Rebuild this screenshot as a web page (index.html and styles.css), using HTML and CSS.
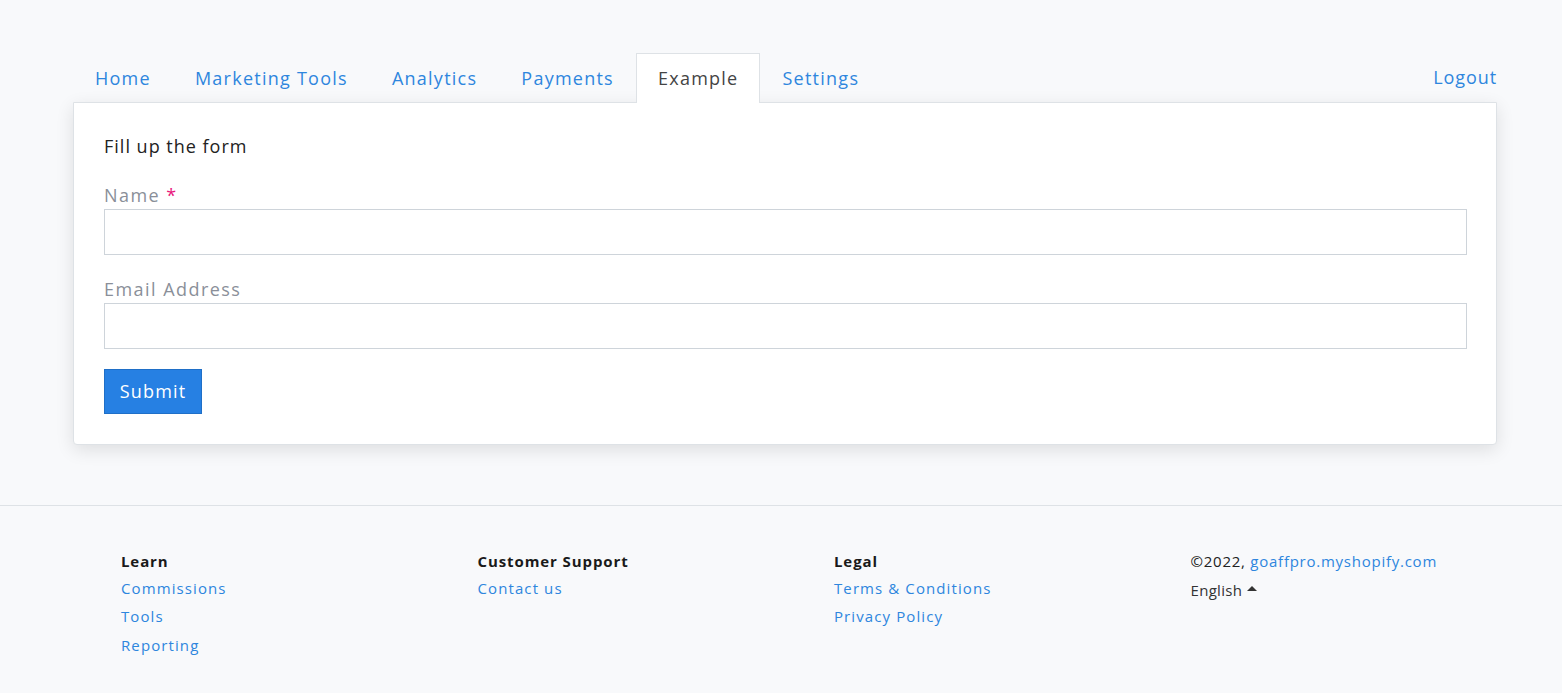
FILE: index.html
```html
<!DOCTYPE html>
<html>
<head>
<meta charset="utf-8">
<link rel="stylesheet" href="styles.css">
</head>
<body>
<div class="page">
  <nav class="tabs">
    <ul class="tab-list">
      <li class="tab"><a href="#">Home</a></li>
      <li class="tab"><a href="#">Marketing Tools</a></li>
      <li class="tab"><a href="#">Analytics</a></li>
      <li class="tab"><a href="#">Payments</a></li>
      <li class="tab active"><a href="#">Example</a></li>
      <li class="tab"><a href="#">Settings</a></li>
    </ul>
    <a class="logout" href="#">Logout</a>
  </nav>
  <section class="card">
    <h2 class="card-title">Fill up the form</h2>
    <div class="field">
      <label class="label">Name <span class="req">*</span></label>
      <input class="input" type="text">
    </div>
    <div class="field">
      <label class="label">Email Address</label>
      <input class="input" type="text">
    </div>
    <button class="btn">Submit</button>
  </section>
</div>
<footer class="footer">
  <div class="footer-grid">
    <div class="col">
      <div class="col-title">Learn</div>
      <a class="flink" href="#">Commissions</a>
      <a class="flink" href="#">Tools</a>
      <a class="flink" href="#">Reporting</a>
    </div>
    <div class="col">
      <div class="col-title">Customer Support</div>
      <a class="flink" href="#">Contact us</a>
    </div>
    <div class="col">
      <div class="col-title">Legal</div>
      <a class="flink" href="#">Terms &amp; Conditions</a>
      <a class="flink" href="#">Privacy Policy</a>
    </div>
    <div class="col">
      <div class="copy">©2022, <a class="clink" href="#">goaffpro.myshopify.com</a></div>
      <div class="lang">English <span class="caret"></span></div>
    </div>
  </div>
</footer>
</body>
</html>
```
FILE: styles.css
```css
* { box-sizing: border-box; }
html, body { margin: 0; padding: 0; }
body {
  background: #f8f9fb;
  font-family: "Open Sans", "DejaVu Sans", sans-serif;
  color: #222;
}
a { text-decoration: none; }
.page {
  padding: 52px 65px 60px 73px;
}
.tabs {
  display: flex;
  align-items: flex-end;
  justify-content: space-between;
}
.tab-list {
  display: flex;
  list-style: none;
  margin: 0;
  padding: 0;
}
.tab a {
  display: block;
  padding: 0 21px 2px;
  height: 50px;
  line-height: 48px;
  font-size: 18px;
  letter-spacing: 1.25px;
  color: #2e86de;
  border: 1px solid transparent;
  border-bottom: none;
  margin-bottom: -1px;
  position: relative;
  z-index: 1;
}
.tab.active a {
  background: #fff;
  border-color: #dee2e6;
  color: #444;
}
.logout {
  font-size: 18px;
  letter-spacing: 0.9px;
  color: #2e86de;
  line-height: 50px;
  height: 50px;
}
.card {
  background: #fff;
  border: 1px solid #dee2e6;
  border-radius: 0 0 4px 4px;
  box-shadow: 0 5px 18px rgba(0, 0, 0, 0.11);
  padding: 31px 29px 30px 30px;
}
.card-title {
  margin: 0 0 23px 0;
  font-size: 18px;
  font-weight: 400;
  line-height: 25px;
  letter-spacing: 1px;
  color: #222;
}
.field { margin-bottom: 20px; }
.field:first-of-type { margin-bottom: 21px; }
.label {
  display: block;
  font-size: 18px;
  line-height: 26px;
  letter-spacing: 1.45px;
  color: #8a8f99;
  margin-bottom: 1px;
}
.req { color: #e8177c; }
.input {
  display: block;
  width: 100%;
  height: 46px;
  border: 1px solid #ced4da;
  border-radius: 0;
  background: #fff;
  font: inherit;
}
.btn {
  display: block;
  width: 98px;
  height: 45px;
  background: #2680e3;
  color: #fff;
  border: 1px solid #1f6fc7;
  font-family: inherit;
  font-size: 18px;
  letter-spacing: 1.2px;
  padding: 0 0 1px;
  border-radius: 0;
}
.footer {
  border-top: 1px solid #dee2e6;
  padding: 44px 0 36px 121px;
}
.footer-grid {
  display: grid;
  grid-template-columns: repeat(4, 356.5px);
}
.col { display: flex; flex-direction: column; }
.col-title {
  font-size: 15px;
  font-weight: 700;
  color: #1a1a1a;
  line-height: 22px;
  letter-spacing: 0.9px;
  margin-bottom: 5px;
}
.flink {
  font-size: 15px;
  color: #2e86de;
  line-height: 22px;
  letter-spacing: 1.1px;
  margin-bottom: 6.3px;
}
.copy {
  font-size: 15px;
  color: #222;
  line-height: 22px;
  margin-bottom: 7px;
  letter-spacing: 0.75px;
}
.clink { color: #2e86de; }
.lang {
  font-size: 15px;
  color: #333;
  line-height: 22px;
  letter-spacing: 0.3px;
  display: flex;
  align-items: center;
  gap: 5px;
}
.caret {
  width: 0;
  height: 0;
  border-left: 5px solid transparent;
  border-right: 5px solid transparent;
  border-bottom: 5px solid #333;
  margin-top: -3px;
}
```
